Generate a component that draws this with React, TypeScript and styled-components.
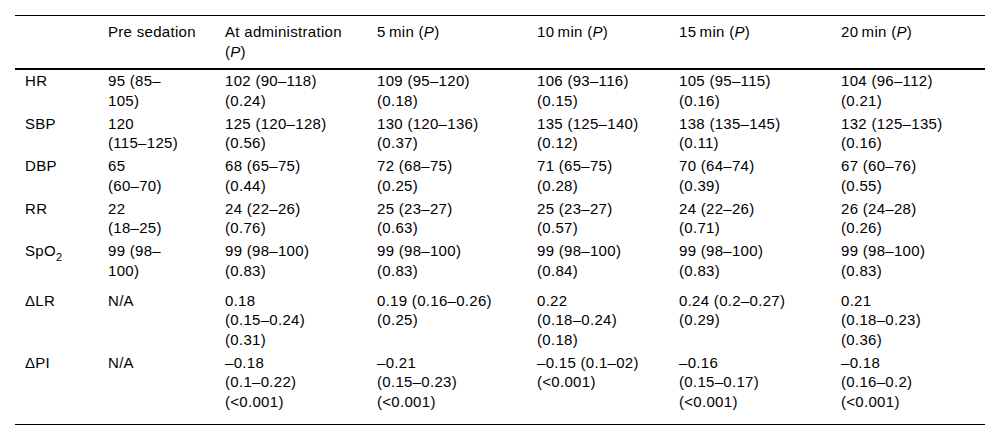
import styled, { createGlobalStyle } from 'styled-components'

const GlobalStyle = createGlobalStyle`
    html, body {
        margin: 0;
        padding: 0;
        background: #ffffff;
    }
    body {
        font-family: "Liberation Sans", Arial, sans-serif;
        color: #000000;
    }
`

const Page = styled.div`
    width: 1000px;
    padding: 15px 15px 0;
    box-sizing: border-box;
`

const Table = styled.table`
    width: 970px;
    table-layout: fixed;
    border-collapse: collapse;
    font-size: 15px;
    line-height: 19.5px;
    letter-spacing: 0.3px;
    border-top: 1px solid #000;
    border-bottom: 1px solid #000;
`

const HeadCell = styled.th`
    font-weight: normal;
    text-align: left;
    vertical-align: top;
    white-space: nowrap;
    padding: 6px 10px 6.5px;
    border-bottom: 2px solid #000;
`

const Cell = styled.td<{ $last?: boolean; $extra?: number }>`
    vertical-align: top;
    white-space: nowrap;
    padding: 1.75px 10px ${p => (p.$last ? 12.5 : 1.75 + (p.$extra || 0))}px;
`

const Sub = styled.sub`
    font-size: 11px;
    vertical-align: -5px;
    line-height: 0;
`

const widths = [83, 117, 152, 160, 142, 162, 154]

const header: React.ReactNode[][] = [
    [''],
    ['Pre sedation'],
    ['At administration', <>(<i>P</i>)</>],
    [<>5{'\u2009'}min (<i>P</i>)</>],
    [<>10{'\u2009'}min (<i>P</i>)</>],
    [<>15{'\u2009'}min (<i>P</i>)</>],
    [<>20{'\u2009'}min (<i>P</i>)</>],
]

type Row = { label: React.ReactNode; cells: string[][]; extra?: number }

const rows: Row[] = [
    {
        label: 'HR',
        cells: [
            ['95 (85–', '105)'],
            ['102 (90–118)', '(0.24)'],
            ['109 (95–120)', '(0.18)'],
            ['106 (93–116)', '(0.15)'],
            ['105 (95–115)', '(0.16)'],
            ['104 (96–112)', '(0.21)'],
        ],
    },
    {
        label: 'SBP',
        cells: [
            ['120', '(115–125)'],
            ['125 (120–128)', '(0.56)'],
            ['130 (120–136)', '(0.37)'],
            ['135 (125–140)', '(0.12)'],
            ['138 (135–145)', '(0.11)'],
            ['132 (125–135)', '(0.16)'],
        ],
    },
    {
        label: 'DBP',
        cells: [
            ['65', '(60–70)'],
            ['68 (65–75)', '(0.44)'],
            ['72 (68–75)', '(0.25)'],
            ['71 (65–75)', '(0.28)'],
            ['70 (64–74)', '(0.39)'],
            ['67 (60–76)', '(0.55)'],
        ],
    },
    {
        label: 'RR',
        cells: [
            ['22', '(18–25)'],
            ['24 (22–26)', '(0.76)'],
            ['25 (23–27)', '(0.63)'],
            ['25 (23–27)', '(0.57)'],
            ['24 (22–26)', '(0.71)'],
            ['26 (24–28)', '(0.26)'],
        ],
    },
    {
        label: <>SpO<Sub>2</Sub></>,
        extra: 7,
        cells: [
            ['99 (98–', '100)'],
            ['99 (98–100)', '(0.83)'],
            ['99 (98–100)', '(0.83)'],
            ['99 (98–100)', '(0.84)'],
            ['99 (98–100)', '(0.83)'],
            ['99 (98–100)', '(0.83)'],
        ],
    },
    {
        label: '\u0394LR',
        cells: [
            ['N/A'],
            ['0.18', '(0.15–0.24)', '(0.31)'],
            ['0.19 (0.16–0.26)', '(0.25)'],
            ['0.22', '(0.18–0.24)', '(0.18)'],
            ['0.24 (0.2–0.27)', '(0.29)'],
            ['0.21', '(0.18–0.23)', '(0.36)'],
        ],
    },
    {
        label: '\u0394PI',
        cells: [
            ['N/A'],
            ['–0.18', '(0.1–0.22)', '(<0.001)'],
            ['–0.21', '(0.15–0.23)', '(<0.001)'],
            ['–0.15 (0.1–02)', '(<0.001)'],
            ['–0.16', '(0.15–0.17)', '(<0.001)'],
            ['–0.18', '(0.16–0.2)', '(<0.001)'],
        ],
    },
]

const Lines = ({ lines }: { lines: React.ReactNode[] }) => (
    <>
        {lines.map((l, i) => (
            <span key={i}>
                {i > 0 && <br />}
                {l}
            </span>
        ))}
    </>
)

export default function App() {
    return (
        <Page>
            <GlobalStyle />
            <Table>
                <colgroup>
                    {widths.map((w, i) => <col key={i} style={{ width: w }} />)}
                </colgroup>
                <thead>
                    <tr>
                        {header.map((h, i) => (
                            <HeadCell key={i}><Lines lines={h} /></HeadCell>
                        ))}
                    </tr>
                </thead>
                <tbody>
                    {rows.map((r, ri) => {
                        const last = ri === rows.length - 1
                        return (
                            <tr key={ri}>
                                <Cell $last={last} $extra={r.extra}>{r.label}</Cell>
                                {r.cells.map((c, ci) => (
                                    <Cell key={ci} $last={last} $extra={r.extra}><Lines lines={c} /></Cell>
                                ))}
                            </tr>
                        )
                    })}
                </tbody>
            </Table>
        </Page>
    )
}
